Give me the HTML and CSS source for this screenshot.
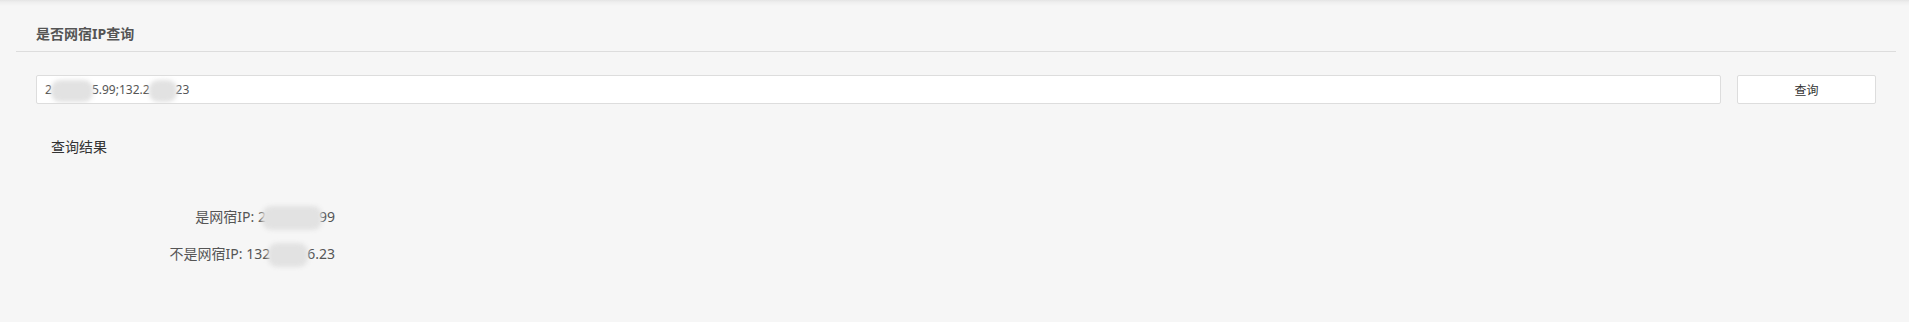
FILE: index.html
```html
<!DOCTYPE html>
<html lang="zh-CN">
<head>
<meta charset="utf-8">
<title>是否网宿IP查询</title>
<link rel="stylesheet" href="styles.css">
</head>
<body>
<div class="page">
  <div class="panel-head">
    <h1 class="panel-title">是否网宿IP查询</h1>
  </div>
  <div class="search-row">
    <div class="ip-input">2<span class="blur b1"></span>5.99;132.2<span class="blur b2"></span>23</div>
    <button class="btn">查询</button>
  </div>
  <div class="result-title">查询结果</div>
  <div class="result-list">
    <div class="result-line">是网宿IP: 2<span class="blur b3"></span>99</div>
    <div class="result-line">不是网宿IP: 132<span class="blur b4"></span>6.23</div>
  </div>
</div>
</body>
</html>
```
FILE: styles.css
```css
html, body {
  margin: 0;
  padding: 0;
  background: #f6f6f6;
}
body {
  font-family: "Noto Sans", "Noto Sans CJK SC", sans-serif;
  color: #555;
  height: 322px;
  background: linear-gradient(to bottom, #e4e4e4 0, #eeeeee 2px, #f6f6f6 6px) #f6f6f6;
}
.page {
  padding: 0 13px 0 16px;
}
.panel-head {
  padding: 24px 0 7px 20px;
  border-bottom: 1px solid #dddddd;
}
.panel-title {
  margin: 0;
  font-size: 14px;
  line-height: 20px;
  font-weight: bold;
  color: #555;
}
.search-row {
  display: flex;
  gap: 16px;
  margin-top: 23px;
  padding: 0 20px;
}
.ip-input {
  flex: 1;
  height: 29px;
  box-sizing: border-box;
  border: 1px solid #dddddd;
  border-radius: 2px;
  background: #fff;
  font-size: 12px;
  line-height: 27px;
  padding-left: 8px;
  color: #555;
  white-space: nowrap;
  overflow: hidden;
}
.btn {
  width: 139px;
  height: 29px;
  box-sizing: border-box;
  border: 1px solid #dddddd;
  border-radius: 2px;
  background: #fff;
  font-family: inherit;
  font-size: 12px;
  color: #333;
  padding: 0;
}
.blur {
  display: inline-block;
  vertical-align: middle;
  background: #e2e2e2;
  border-radius: 9px;
  filter: blur(2px);
}
.b1 { width: 42px; height: 22px; margin: -6px -1px -6px -1px; }
.b2 { width: 28px; height: 22px; margin: -6px -1px -6px -1px; }
.b3 { width: 60px; height: 24px; margin: -6px -3px -6px -4px; }
.b4 { width: 40px; height: 24px; margin: -6px -1px -6px -2px; }
.result-title {
  margin-top: 33px;
  padding-left: 35px;
  font-size: 14px;
  line-height: 20px;
  color: #333;
}
.result-list {
  width: 319px;
  margin-top: 50px;
  text-align: right;
}
.result-line {
  font-size: 14px;
  line-height: 20px;
  color: #555;
  margin-bottom: 17px;
  white-space: nowrap;
}
```
